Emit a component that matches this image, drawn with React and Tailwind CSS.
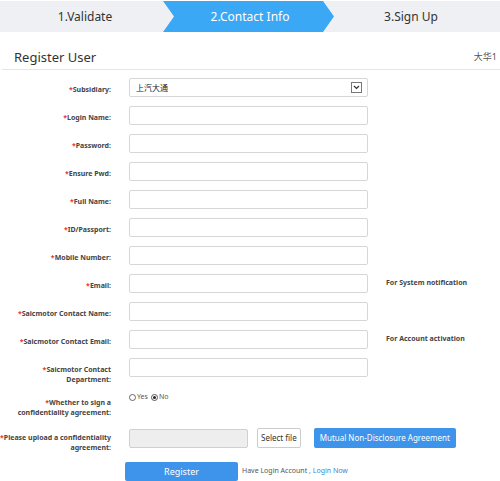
const FONT = { fontFamily: '"Noto Sans", "Noto Sans CJK SC", sans-serif' };

const rows = [
  { label: "Subsidiary:", type: "select" },
  { label: "Login Name:" },
  { label: "Password:" },
  { label: "Ensure Pwd:" },
  { label: "Full Name:" },
  { label: "ID/Passport:" },
  { label: "Mobile Number:" },
  { label: "Email:", note: "For System notification" },
  { label: "Saicmotor Contact Name:" },
  { label: "Saicmotor Contact Email:", note: "For Account activation" },
];

function Label({ lines, className = "pt-[7px]" }) {
  return (
    <div className={`w-[111px] shrink-0 text-right text-[7px] font-bold leading-[10px] text-[#444] whitespace-nowrap ${className}`}>
      {lines.map((l, i) => (
        <div key={i}>
          {i === 0 && <span className="text-[#e53935]">*</span>}
          {l}
        </div>
      ))}
    </div>
  );
}

function Row({ label, type, note }) {
  return (
    <div className="flex items-start mt-[9px] first:mt-0">
      <Label lines={[label]} />
      <div className="ml-[18px] w-[239px] h-[19px] border border-[#d6d6d6] rounded-[2px] bg-white flex items-center">
        {type === "select" && (
          <>
            <span className="pl-[6px] text-[8px] text-[#222] flex-1">上汽大通</span>
            <span className="mr-[5px] w-[11px] h-[11px] border border-[#777] flex items-center justify-center">
              <svg width="7" height="5" viewBox="0 0 7 5">
                <path d="M1 1l2.5 2.5L6 1" stroke="#333" strokeWidth="1.2" fill="none" />
              </svg>
            </span>
          </>
        )}
      </div>
      {note && (
        <div className="ml-[18px] pt-[4px] text-[7px] font-bold leading-[10px] text-[#444] whitespace-nowrap">{note}</div>
      )}
    </div>
  );
}

export default function App() {
  return (
    <div className="w-[500px] h-[481px] bg-white overflow-hidden" style={FONT}>
      {/* stepper */}
      <div className="mt-[1px] h-[31px] bg-[#eff0f4] flex items-center text-[12px]">
        <div className="w-[163px] pl-[7px] text-center text-[#333]">1.Validate</div>
        <div className="w-[171px] h-full bg-[#3aa8f5] text-white flex items-center justify-center pl-[3px] [clip-path:polygon(0_0,160px_0,171px_50%,160px_100%,0_100%,11px_50%)]">
          2.Contact Info
        </div>
        <div className="flex-1 pr-[12px] text-center text-[#333]">3.Sign Up</div>
      </div>

      {/* title */}
      <div className="flex items-center justify-between pt-[15px] pb-[2px] border-b border-[#e6e6e6] ml-[2px]">
        <div className="pl-[12px] text-[13px] leading-[20px] text-[#333]">Register User</div>
        <div className="pr-[3px] text-[9px] text-[#555]">大华1</div>
      </div>

      <div className="mt-[8px]">
        {rows.map((r) => (
          <Row key={r.label} {...r} />
        ))}

        {/* department */}
        <div className="flex items-start mt-[9px]">
          <Label lines={["Saicmotor Contact", "Department:"]} />
          <div className="ml-[18px] w-[239px] h-[19px] border border-[#d6d6d6] rounded-[2px]" />
        </div>

        {/* confidentiality */}
        <div className="flex items-start mt-[6px]">
          <Label lines={["Whether to sign a", "confidentiality agreement:"]} />
          <div className="ml-[18px] pt-[1px] flex items-center text-[7px] leading-[10px] text-[#555]">
            <span className="w-[7px] h-[7px] rounded-full border border-[#666] mr-[1px]" />
            Yes
            <span className="ml-[3px] w-[7px] h-[7px] rounded-full border border-[#555] flex items-center justify-center mr-[1px]">
              <span className="w-[3px] h-[3px] rounded-full bg-[#222]" />
            </span>
            No
          </div>
        </div>

        {/* upload */}
        <div className="flex items-start mt-[10px]">
          <Label lines={["Please upload a confidentiality", "agreement:"]} className="pt-[5px]" />
          <div className="ml-[18px] flex items-center">
            <div className="w-[119px] h-[19px] border border-[#d0d0d0] bg-[#eeeeee] rounded-[2px]" />
            <button className="ml-[9px] h-[20px] px-[3px] border border-[#ccc] rounded-[2px] bg-white text-[8px] text-[#333]">
              Select file
            </button>
            <button className="ml-[13px] h-[20px] px-[6px] rounded-[2px] bg-[#3d94ea] text-[8px] text-white">
              Mutual Non-Disclosure Agreement
            </button>
          </div>
        </div>

        {/* register */}
        <div className="flex items-center mt-[9px] pl-[125px]">
          <button className="w-[113px] h-[19px] rounded-[2px] bg-[#3d94ea] text-[9px] text-white">Register</button>
          <span className="ml-[4px] text-[7px] text-[#555]">
            Have Login Account , <span className="text-[#3b86d6]">Login Now</span>
          </span>
        </div>
      </div>
    </div>
  );
}
